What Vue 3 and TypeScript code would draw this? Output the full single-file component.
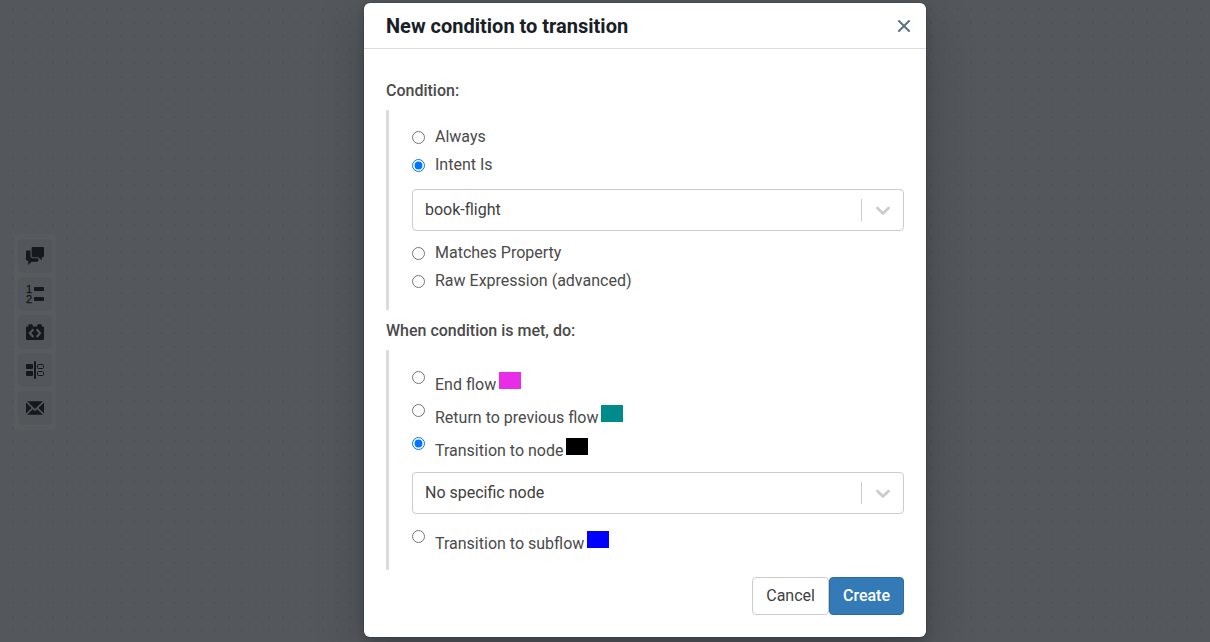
<script setup lang="ts">
import { ref } from 'vue'

interface Choice {
  value: string
  label: string
  tone?: string
}

const conditions: Choice[] = [
  { value: 'always', label: 'Always' },
  { value: 'intent', label: 'Intent Is' },
  { value: 'property', label: 'Matches Property' },
  { value: 'raw', label: 'Raw Expression (advanced)' },
]

const actions: Choice[] = [
  { value: 'end', label: 'End flow', tone: 'magenta' },
  { value: 'return', label: 'Return to previous flow', tone: 'teal' },
  { value: 'node', label: 'Transition to node', tone: 'black' },
  { value: 'subflow', label: 'Transition to subflow', tone: 'blue' },
]

const chevron =
  'M4.516 7.548c.436-.446 1.043-.481 1.576 0L10 11.295l3.908-3.747c.533-.481 1.141-.446 1.574 0 .436.445.408 1.197 0 1.615-.406.418-4.695 4.502-4.695 4.502a1.095 1.095 0 0 1-1.576 0S4.924 9.581 4.516 9.163s-.436-1.170 0-1.615z'

const condition = ref('intent')
const action = ref('node')
const intent = ref('book-flight')
const node = ref('none')
</script>

<template>
  <div class="page">
    <nav class="toolbar" aria-label="Node types">
      <button type="button" class="tool" aria-label="Say something">
        <svg viewBox="0 0 16 16"><path d="M6 10c-1.100 0-2-.9-2-2V3H1c-.55 0-1 .45-1 1v7c0 .55.45 1 1 1h1v4l3-3h5c.55 0 1-.45 1-1v-2H6zM15 0H6c-.55 0-1 .45-1 1v7c0 .55.45 1 1 1h5l3 3V9h1c.55 0 1-.45 1-1V1c0-.55-.45-1-1-1z" /></svg>
      </button>
      <button type="button" class="tool" aria-label="Choice">
        <svg viewBox="0 0 18 18">
          <text x="0" y="8">1</text>
          <text x="0" y="18">2</text>
          <rect x="8" y="2" width="10" height="4" rx="1" />
          <rect x="8" y="12" width="10" height="4" rx="1" />
        </svg>
      </button>
      <button type="button" class="tool" aria-label="Execute code">
        <svg viewBox="0 0 16 16">
          <path d="M15 3h-1V2c0-.55-.45-1-1-1h-2c-.55 0-1 .45-1 1v1H6V2c0-.55-.45-1-1-1H3c-.55 0-1 .45-1 1v1H1c-.55 0-1 .45-1 1v10c0 .55.45 1 1 1h14c.55 0 1-.45 1-1V4c0-.55-.45-1-1-1z" />
          <path class="cut" d="M6.500 5.500L3.500 9l3 3.500M9.500 5.500l3 3.500-3 3.500" />
        </svg>
      </button>
      <button type="button" class="tool" aria-label="Router">
        <svg viewBox="0 0 18 18">
          <rect x="0" y="3" width="7" height="5" rx="1" />
          <rect x="0" y="10" width="7" height="5" rx="1" />
          <rect x="8" y="0" width="2" height="18" rx="1" />
          <rect class="line" x="11.500" y="3.500" width="6" height="4" rx="1" />
          <rect class="line" x="11.500" y="10.500" width="6" height="4" rx="1" />
        </svg>
      </button>
      <button type="button" class="tool" aria-label="Send email">
        <svg viewBox="0 0 16 16"><path d="M0 3.060v9.880L4.940 8 0 3.060zM14.940 2H1.060L8 8.940 14.940 2zm-6.410 8.530a.75.75 0 0 1-1.060 0L6 9.060 1.060 14h13.880L10 9.060l-1.470 1.470zM11.060 8L16 12.940V3.060L11.060 8z" /></svg>
      </button>
    </nav>

    <section class="dialog" role="dialog" aria-modal="true" aria-labelledby="dialog-title">
      <header class="head">
        <h1 id="dialog-title">New condition to transition</h1>
        <button type="button" class="close" aria-label="Close">
          <svg viewBox="0 0 12 12"><path d="M1 1l10 10M11 1L1 11" /></svg>
        </button>
      </header>

      <form class="body" @submit.prevent>
        <h2 id="condition-title">Condition:</h2>
        <div class="group conditions" role="radiogroup" aria-labelledby="condition-title">
          <template v-for="c in conditions" :key="c.value">
            <label class="row">
              <input v-model="condition" type="radio" name="condition" :value="c.value" />
              <span>{{ c.label }}</span>
            </label>
            <div v-if="c.value === 'intent'" class="picker">
              <select v-model="intent" aria-label="Intent">
                <option value="book-flight">book-flight</option>
              </select>
              <span class="indicator">
                <svg viewBox="0 0 20 20"><path :d="chevron" /></svg>
              </span>
            </div>
          </template>
        </div>

        <h2 id="action-title">When condition is met, do:</h2>
        <div class="group actions" role="radiogroup" aria-labelledby="action-title">
          <template v-for="a in actions" :key="a.value">
            <label class="row">
              <input v-model="action" type="radio" name="action" :value="a.value" />
              <span>{{ a.label }}</span>
              <i class="swatch" :class="a.tone"></i>
            </label>
            <div v-if="a.value === 'node'" class="picker">
              <select v-model="node" aria-label="Node">
                <option value="none">No specific node</option>
              </select>
              <span class="indicator">
                <svg viewBox="0 0 20 20"><path :d="chevron" /></svg>
              </span>
            </div>
          </template>
        </div>

        <footer class="foot">
          <button type="button" class="btn">Cancel</button>
          <button type="submit" class="btn primary">Create</button>
        </footer>
      </form>
    </section>
  </div>
</template>

<style>
body {
  margin: 0;
  background: #54585c;
}
</style>

<style scoped>
.page {
  position: relative;
  box-sizing: border-box;
  min-height: 100vh;
  padding: 3px 0 5px 80px;
  overflow: hidden;
  font: 16px/20px Roboto, "Liberation Sans", sans-serif;
  color: #4a4a4a;
  background-color: #54585c;
  background-image:
    radial-gradient(circle at 1px 1px, #4f5357 1px, transparent 1px),
    radial-gradient(circle at 14px 1px, #4f5357 1px, transparent 1px),
    radial-gradient(circle at 1px 14px, #4f5357 1px, transparent 1px),
    radial-gradient(circle at 14px 14px, #4f5357 1px, transparent 1px);
  background-size: 27px 27px;
  background-position: 12px 22px;
}

.toolbar {
  position: absolute;
  left: 14px;
  top: 234px;
  display: flex;
  flex-direction: column;
  gap: 4px;
  padding: 5px 4px;
  border-radius: 4px;
  background: #575b5e;
}

.tool {
  display: flex;
  align-items: center;
  justify-content: center;
  width: 34px;
  height: 34px;
  padding: 0;
  border: 0;
  border-radius: 5px;
  background: #53575b;
}

.tool svg {
  width: 18px;
  height: 18px;
  fill: #15191d;
  overflow: visible;
}

.tool text {
  font: 11px "Liberation Sans", sans-serif;
  stroke: #15191d;
  stroke-width: 0.3;
}

.tool .cut {
  fill: none;
  stroke: #53575b;
  stroke-width: 2;
}

.tool .line {
  fill: #53575b;
  stroke: #15191d;
  stroke-width: 1;
}

.dialog {
  box-sizing: border-box;
  width: 100%;
  max-width: 562px;
  margin: 0 auto;
  position: relative;
  border-radius: 6px;
  background: #fff;
  box-shadow: 0 0 0 1px rgba(16, 22, 26, 0.1), 0 4px 8px rgba(16, 22, 26, 0.2), 0 18px 46px 6px rgba(16, 22, 26, 0.2);
}

.head {
  display: flex;
  align-items: center;
  justify-content: space-between;
  height: 45px;
  padding: 0 16px 0 22px;
  border-bottom: 1px solid #d9dbdc;
}

h1 {
  margin: 0;
  font-size: 20px;
  font-weight: 700;
  line-height: 24px;
  color: #182026;
}

.close {
  display: flex;
  padding: 0;
  border: 0;
  background: none;
}

.close svg {
  width: 12px;
  height: 12px;
  fill: none;
  stroke: #5c7080;
  stroke-width: 2;
  stroke-linecap: round;
}

.body {
  padding: 21px 22px 22px;
}

h2 {
  margin: 0;
  padding: 11px 0 9px;
  font-size: 16px;
  font-weight: 500;
  line-height: 20px;
}

.group {
  border-left: 3px solid #dcdcdc;
  padding-left: 23px;
}

.conditions {
  padding-top: 12px;
  padding-bottom: 16px;
}

.actions {
  padding-top: 15px;
  padding-bottom: 13px;
}

.row {
  display: flex;
  align-items: flex-start;
}

input {
  flex: none;
  width: 13px;
  height: 13px;
  margin: 0 10px 0 0;
}

.conditions .row {
  height: 23px;
  padding-top: 5px;
}

.conditions input {
  margin-top: 4px;
}

.actions .row {
  height: 27px;
  padding-top: 6px;
}

.actions .row span {
  margin-top: 4px;
}

.swatch {
  width: 22px;
  height: 17px;
  margin: 1px 0 0 3px;
}

.magenta { background: #e82ce8; }
.teal { background: #008b8b; }
.black { background: #000; }
.blue { background: #00f; }

.picker {
  display: grid;
  align-items: center;
}

.conditions .picker {
  margin: 11px 0 7px;
}

.actions .picker {
  margin: 8px 0 10px;
}

select,
.indicator {
  grid-area: 1 / 1;
}

select {
  appearance: none;
  box-sizing: border-box;
  width: 100%;
  height: 42px;
  padding: 0 54px 0 12px;
  border: 1px solid #ccc;
  border-radius: 4px;
  background: #fff;
  font: inherit;
  color: #404040;
}

.indicator {
  justify-self: end;
  display: flex;
  align-items: center;
  height: 22px;
  padding: 0 9px;
  border-left: 1px solid #ccc;
  pointer-events: none;
}

.indicator svg {
  width: 24px;
  height: 24px;
  fill: #ccc;
}

.foot {
  display: flex;
  justify-content: flex-end;
  padding-top: 7px;
}

.btn {
  height: 38px;
  padding: 0 13px;
  border: 1px solid #ccc;
  border-radius: 4px;
  background: #fff;
  font: inherit;
  color: #404040;
}

.primary {
  border-color: #2e6da4;
  background: #337ab7;
  font-weight: 500;
  color: #fff;
}
</style>
